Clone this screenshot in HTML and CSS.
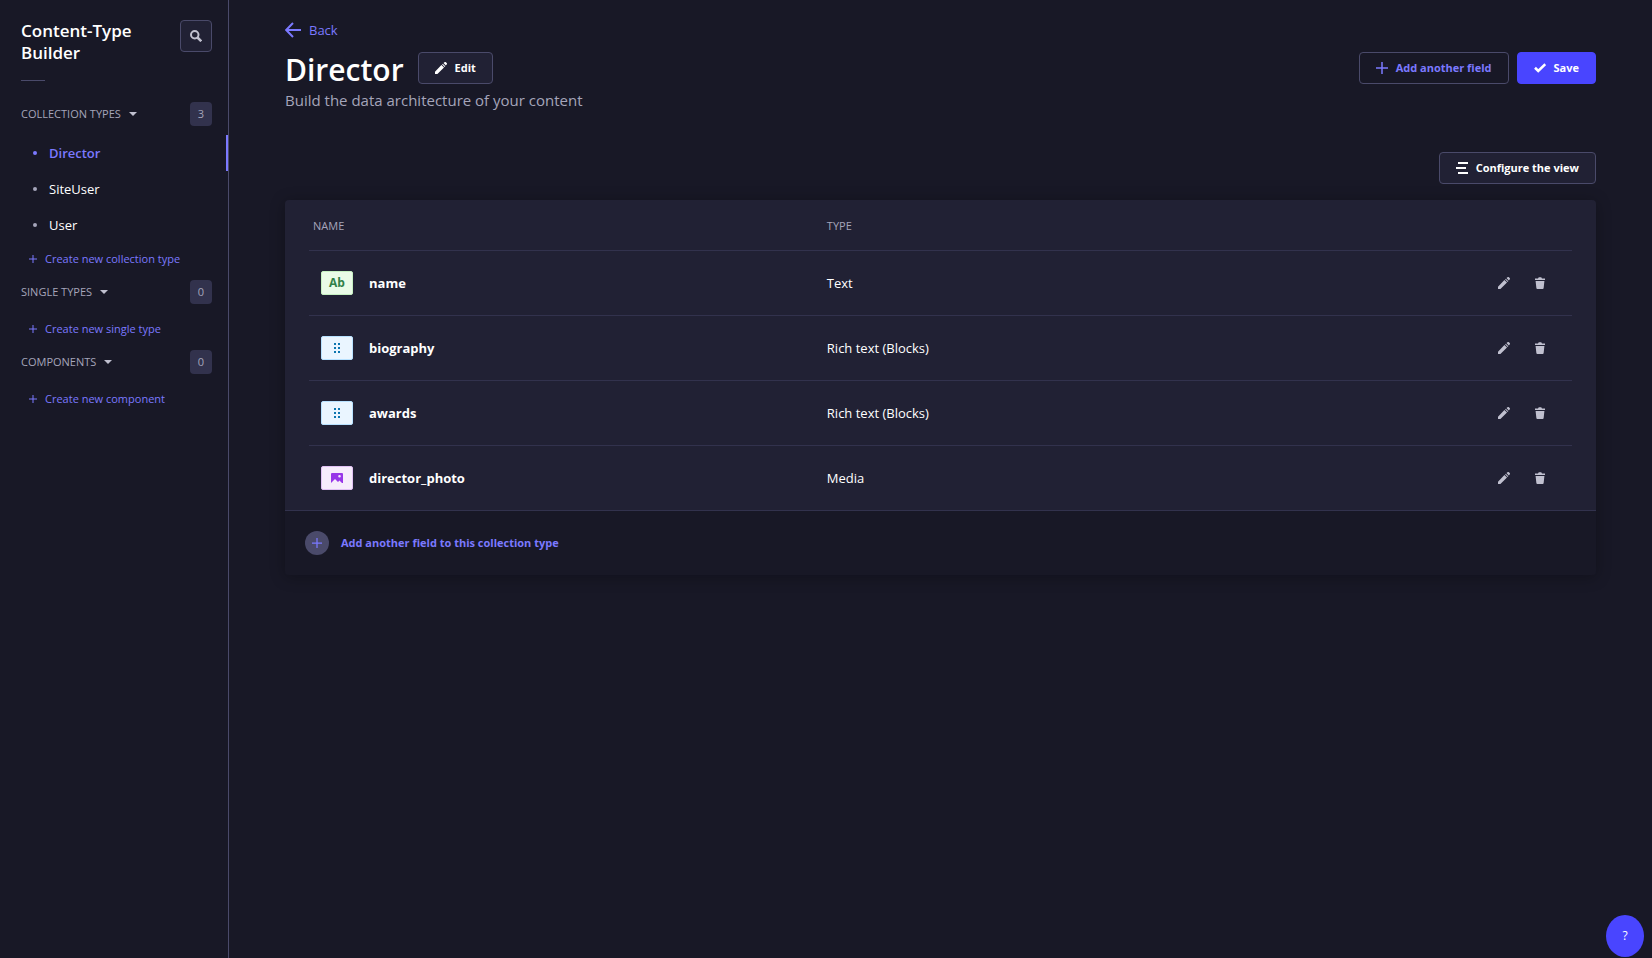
FILE: index.html
```
<!DOCTYPE html>
<html lang="en">
<head>
<meta charset="utf-8">
<meta name="viewport" content="width=device-width, initial-scale=1">
<title>Content-Type Builder</title>
<link rel="stylesheet" href="styles.css">
</head>
<body>
<svg class="sprite" aria-hidden="true">
  <symbol id="pencil" viewBox="0 0 24 24"><path d="M0 19.600V24h4.800L18 11.200 12.800 6z M14.200 4.800l5 5 1.400-1.400-5-5z M17 2.200L19 .6c.8-.8 2-.8 2.800 0l1.600 1.600c.8.8.8 2 0 2.800l-1.700 2z"/></symbol>
  <symbol id="trash" viewBox="0 0 24 24"><path d="M2 3h6l1.500-2.600h5L16 3h6v2.800H2z M3.200 8h17.600l-1.500 14.200c-.1 1-.9 1.800-1.900 1.800H6.600c-1 0-1.800-.8-1.900-1.800z"/></symbol>
  <symbol id="plus" viewBox="0 0 24 24"><path d="M10.500 0h3v10.500H24v3H13.500V24h-3V13.500H0v-3h10.500z"/></symbol>
  <symbol id="caret" viewBox="0 0 8 4"><path d="M0 0h8L4 4z"/></symbol>
  <symbol id="blocks" viewBox="0 0 6 10"><path d="M0 0h2v2H0z M4 0h2v2H4z M0 4h2v2H0z M4 4h2v2H4z M0 8h2v2H0z M4 8h2v2H4z"/></symbol>
</svg>
<div class="layout">
  <nav class="sidebar" aria-label="Content-Type Builder">
    <div class="sidebar-head">
      <h2 class="sidebar-title">Content-Type Builder</h2>
      <button class="search" type="button" aria-label="Search">
        <svg width="12" height="12" viewBox="0 0 24 24" fill="none" stroke="currentColor" stroke-width="4"><circle cx="9.500" cy="9.500" r="7.500"/><path d="M15 15l7.500 7.500" stroke-width="5"/></svg>
      </button>
    </div>
    <hr class="divider">

    <section class="section">
      <div class="section-head">
        <button class="section-toggle" type="button">COLLECTION TYPES <svg width="8" height="4"><use href="#caret"/></svg></button>
        <span class="count">3</span>
      </div>
      <ul class="types">
        <li><a class="type active" href="#director">Director</a></li>
        <li><a class="type" href="#siteuser">SiteUser</a></li>
        <li><a class="type" href="#user">User</a></li>
      </ul>
      <a class="create" href="#new-collection"><svg width="8" height="8"><use href="#plus"/></svg>Create new collection type</a>
    </section>

    <section class="section">
      <div class="section-head">
        <button class="section-toggle" type="button">SINGLE TYPES <svg width="8" height="4"><use href="#caret"/></svg></button>
        <span class="count">0</span>
      </div>
      <ul class="types"></ul>
      <a class="create" href="#new-single"><svg width="8" height="8"><use href="#plus"/></svg>Create new single type</a>
    </section>

    <section class="section">
      <div class="section-head">
        <button class="section-toggle" type="button">COMPONENTS <svg width="8" height="4"><use href="#caret"/></svg></button>
        <span class="count">0</span>
      </div>
      <ul class="types"></ul>
      <a class="create" href="#new-component"><svg width="8" height="8"><use href="#plus"/></svg>Create new component</a>
    </section>
  </nav>

  <main class="main">
    <a class="back" href="#back"><svg width="16" height="16" viewBox="0 0 16 16" fill="none" stroke="currentColor" stroke-width="2"><path d="M16 8H1.500M8 1L1.200 8 8 15"/></svg>Back</a>
    <header class="head">
      <div class="head-title">
        <h1>Director</h1>
        <button class="btn" type="button"><svg width="12" height="12"><use href="#pencil"/></svg>Edit</button>
      </div>
      <div class="head-actions">
        <button class="btn btn-outline" type="button"><svg width="12" height="12"><use href="#plus"/></svg>Add another field</button>
        <button class="btn btn-primary" type="button"><svg width="12" height="12" viewBox="0 0 24 24" fill="none" stroke="currentColor" stroke-width="5"><path d="M2 11.500l6.500 6.500L22.500 4.500"/></svg>Save</button>
      </div>
    </header>
    <p class="subtitle">Build the data architecture of your content</p>
    <div class="toolbar">
      <button class="btn" type="button"><svg width="12" height="12" viewBox="0 0 12 12"><path d="M2 0h10v2H2z M0 5h10v2H0z M2 10h10v2H2z"/></svg>Configure the view</button>
    </div>

    <div class="card">
      <div class="table-wrap">
        <table class="fields">
          <thead>
            <tr><th class="col-name" scope="col">NAME</th><th scope="col">TYPE</th><td></td></tr>
          </thead>
          <tbody>
            <tr>
              <td><div class="field"><span class="kind kind-text">Ab</span>name</div></td>
              <td>Text</td>
              <td><div class="actions"><button type="button" aria-label="Edit name"><svg width="12" height="12"><use href="#pencil"/></svg></button><button type="button" aria-label="Delete name"><svg width="12" height="12"><use href="#trash"/></svg></button></div></td>
            </tr>
            <tr>
              <td><div class="field"><span class="kind kind-blocks"><svg width="6" height="10"><use href="#blocks"/></svg></span>biography</div></td>
              <td>Rich text (Blocks)</td>
              <td><div class="actions"><button type="button" aria-label="Edit biography"><svg width="12" height="12"><use href="#pencil"/></svg></button><button type="button" aria-label="Delete biography"><svg width="12" height="12"><use href="#trash"/></svg></button></div></td>
            </tr>
            <tr>
              <td><div class="field"><span class="kind kind-blocks"><svg width="6" height="10"><use href="#blocks"/></svg></span>awards</div></td>
              <td>Rich text (Blocks)</td>
              <td><div class="actions"><button type="button" aria-label="Edit awards"><svg width="12" height="12"><use href="#pencil"/></svg></button><button type="button" aria-label="Delete awards"><svg width="12" height="12"><use href="#trash"/></svg></button></div></td>
            </tr>
            <tr>
              <td><div class="field"><span class="kind kind-media"><svg width="12" height="10" viewBox="0 0 12 10"><path fill-rule="evenodd" d="M1 0h10a1 1 0 0 1 1 1v9h-1L8.500 7.500 7 9 4 6 0 10V1a1 1 0 0 1 1-1z M8.500 2a1.300 1.300 0 1 0 0 2.600 1.300 1.300 0 0 0 0-2.600z"/></svg></span>director_photo</div></td>
              <td>Media</td>
              <td><div class="actions"><button type="button" aria-label="Edit director_photo"><svg width="12" height="12"><use href="#pencil"/></svg></button><button type="button" aria-label="Delete director_photo"><svg width="12" height="12"><use href="#trash"/></svg></button></div></td>
            </tr>
          </tbody>
        </table>
      </div>
      <button class="add-field" type="button"><span class="add-icon"><svg width="10" height="10"><use href="#plus"/></svg></span>Add another field to this collection type</button>
    </div>
  </main>
</div>
<button class="help" type="button" aria-label="Help">?</button>
</body>
</html>
```
FILE: styles.css
```
* {
  box-sizing: border-box;
}

body {
  margin: 0;
  background: #181826;
  color: #fff;
  font: 13px/20px "Open Sans", "Noto Sans", sans-serif;
}

svg {
  display: block;
  flex: none;
  fill: currentColor;
}

svg[fill="none"] {
  fill: none;
}

.sprite {
  position: absolute;
  width: 0;
  height: 0;
}

button {
  margin: 0;
  padding: 0;
  border: 0;
  background: none;
  color: inherit;
  font: inherit;
  cursor: pointer;
}

a {
  color: inherit;
  text-decoration: none;
}

.layout {
  display: grid;
  grid-template-columns: 229px 1fr;
  min-height: 100vh;
}

.sidebar {
  padding-top: 20px;
  border-right: 1px solid #4a4a6a;
}

.sidebar-head {
  display: flex;
  justify-content: space-between;
  align-items: flex-start;
  padding: 0 16px 0 21px;
}

.sidebar-title {
  width: 130px;
  margin: 0;
  font-size: 17px;
  line-height: 22px;
  font-weight: 600;
}

.search {
  display: grid;
  place-items: center;
  width: 32px;
  height: 32px;
  border: 1px solid #4a4a6a;
  border-radius: 4px;
  background: #212134;
  color: #c0c0cf;
}

.divider {
  width: 24px;
  height: 1px;
  margin: 16px 0 21px 21px;
  border: 0;
  background: #4a4a6a;
}

.section {
  margin-bottom: 13px;
}

.section-head {
  display: flex;
  justify-content: space-between;
  align-items: center;
  padding: 0 16px 0 21px;
}

.section-toggle {
  display: flex;
  align-items: center;
  gap: 8px;
  color: #a5a5ba;
  font-size: 11px;
  line-height: 16px;
}

.section-toggle svg {
  color: #c0c0cf;
}

.count {
  width: 22px;
  border-radius: 4px;
  background: #32324d;
  color: #a5a5ba;
  font-size: 11px;
  line-height: 24px;
  text-align: center;
}

.types {
  margin: 0;
  padding: 9px 0 8px;
  list-style: none;
}

.type {
  display: flex;
  align-items: center;
  gap: 12px;
  height: 36px;
  padding-left: 33px;
}

.type::before {
  content: "";
  width: 4px;
  height: 4px;
  border-radius: 50%;
  background: #a5a5ba;
}

.type.active {
  border-right: 2px solid #7b79ff;
  color: #7b79ff;
  font-weight: 600;
}

.type.active::before {
  background: #7b79ff;
}

.create {
  display: flex;
  align-items: center;
  gap: 8px;
  padding-left: 29px;
  color: #7b79ff;
  font-size: 11px;
  line-height: 16px;
}

.main {
  padding: 20px 56px;
}

.back {
  display: flex;
  align-items: center;
  gap: 8px;
  width: fit-content;
  color: #7b79ff;
}

.head,
.head-title,
.head-actions {
  display: flex;
  align-items: center;
}

.head {
  justify-content: space-between;
  margin-top: 8px;
}

.head-title {
  gap: 14px;
}

.head-actions {
  gap: 8px;
}

h1 {
  margin: 0;
  padding-top: 4px;
  font-size: 30px;
  line-height: 36px;
  font-weight: 600;
}

.btn {
  display: flex;
  align-items: center;
  gap: 8px;
  height: 32px;
  padding: 0 16px;
  border: 1px solid #4a4a6a;
  border-radius: 4px;
  background: #212134;
  font-size: 11px;
  line-height: 16px;
  font-weight: 700;
}

.btn-outline {
  background: #181826;
  color: #7b79ff;
}

.btn-primary {
  border-color: #4945ff;
  background: #4945ff;
}

.subtitle {
  margin: 0;
  color: #a5a5ba;
  font-size: 15px;
  line-height: 24px;
}

.toolbar {
  display: flex;
  justify-content: flex-end;
  margin: 40px 0 16px;
}

.card {
  border-radius: 4px;
  box-shadow: 0 2px 15px rgba(3, 3, 5, 0.3);
}

.table-wrap {
  padding: 0 24px;
  border-radius: 4px 4px 0 0;
  background: #212134;
}

.fields {
  width: 100%;
  border-collapse: collapse;
}

.fields th {
  height: 50px;
  padding: 2px 0 0;
  color: #a5a5ba;
  font-size: 11px;
  font-weight: 400;
  text-align: left;
}

.fields .col-name {
  width: 41%;
  padding-left: 4px;
}

.fields tbody td {
  height: 65px;
  padding: 0;
  border-top: 1px solid #32324d;
}

.field {
  display: flex;
  align-items: center;
  gap: 16px;
  padding-left: 12px;
  font-weight: 700;
}

.kind {
  display: grid;
  place-items: center;
  width: 32px;
  height: 24px;
  border: 1px solid;
  border-radius: 2px;
  font-size: 12px;
  line-height: 16px;
}

.kind-text {
  border-color: #c6f0c2;
  background: #eafbe7;
  color: #328048;
}

.kind-blocks {
  border-color: #b8e1ff;
  background: #eaf5ff;
  color: #0c75af;
}

.kind-media {
  border-color: #e0c1f4;
  background: #f6ecfc;
  color: #9736e8;
}

.actions {
  display: flex;
  justify-content: flex-end;
  gap: 4px;
  padding-right: 16px;
  color: #c0c0cf;
}

.actions button {
  display: grid;
  place-items: center;
  width: 32px;
  height: 32px;
}

.add-field {
  display: flex;
  align-items: center;
  gap: 12px;
  width: 100%;
  padding: 20px;
  border-top: 1px solid #32324d;
  border-radius: 0 0 4px 4px;
  background: #181826;
  color: #7b79ff;
  font-size: 11px;
  line-height: 24px;
  font-weight: 700;
}

.add-icon {
  display: grid;
  place-items: center;
  width: 24px;
  height: 24px;
  border-radius: 50%;
  background: #4a4a6a;
}

.help {
  position: fixed;
  right: 8px;
  bottom: 1px;
  width: 38px;
  height: 42px;
  border-radius: 50%;
  background: #4945ff;
  font-size: 12px;
}
```
